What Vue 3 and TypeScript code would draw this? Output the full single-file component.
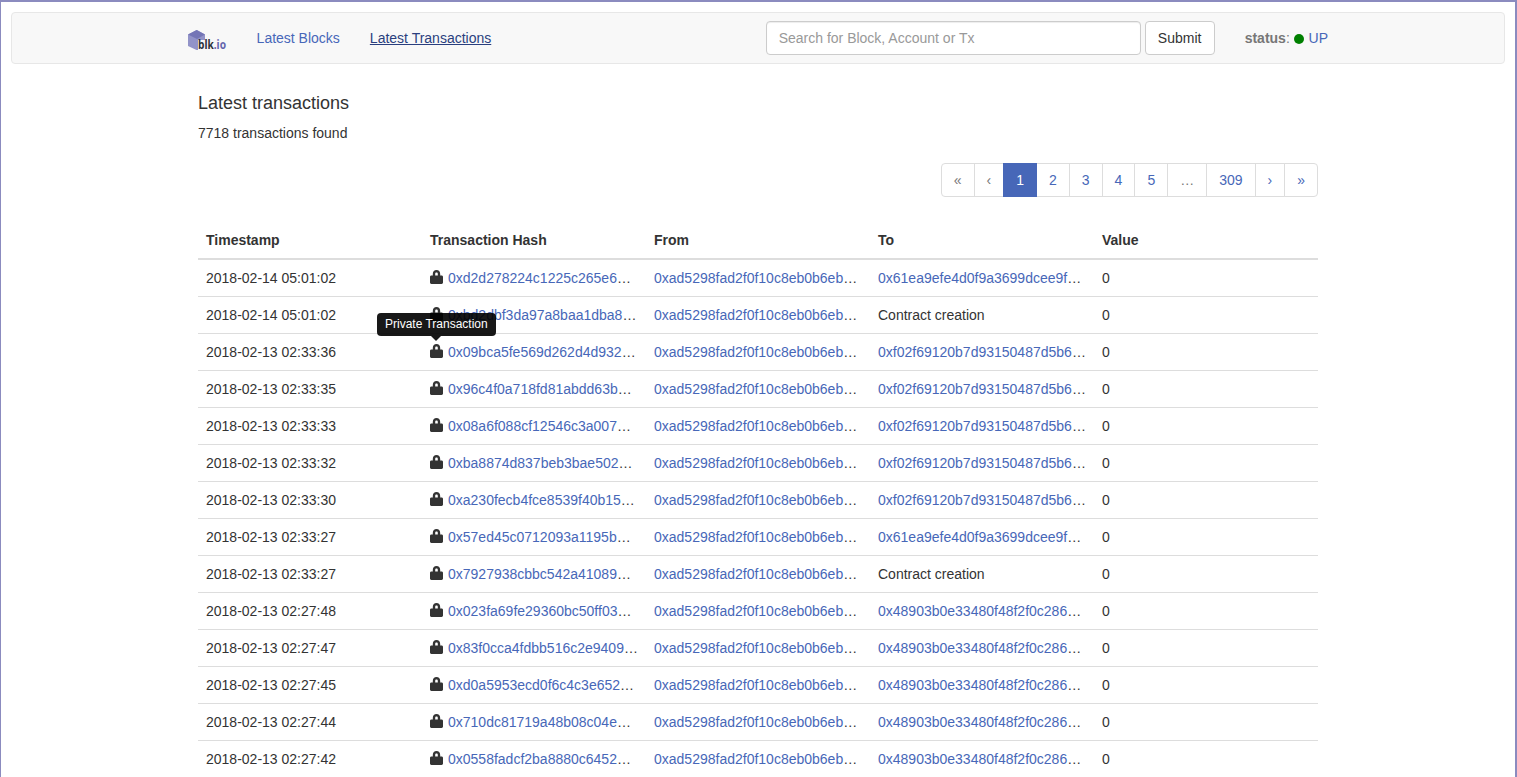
<script setup lang="ts">
interface Tx { time: string; hash: string; to: string | null }
const FROM = '0xad5298fad2f0f10c8eb0b6eb29c1a4b5d3e7f901'
const A = '0x61ea9efe4d0f9a3699dcee9f2b7c1d5e8a3f4c60'
const B = '0xf02f69120b7d93150487d5b6c3e1a9f07d24b8e1'
const C = '0x48903b0e33480f48f2f0c2869ad1e7b3c5a04f92'
const rows: Tx[] = [
  { time: '2018-02-14 05:01:02', hash: '0xd2d278224c1225c265e6a1b3d9f0e47c', to: A },
  { time: '2018-02-14 05:01:02', hash: '0xbd2dbf3da97a8baa1dba8e3c47f1d0a2', to: null },
  { time: '2018-02-13 02:33:36', hash: '0x09bca5fe569d262d4d932f7a1c8e60b4', to: B },
  { time: '2018-02-13 02:33:35', hash: '0x96c4f0a718fd81abdd63b2e9c04d17a5', to: B },
  { time: '2018-02-13 02:33:33', hash: '0x08a6f088cf12546c3a007d4e91b2c6f3', to: B },
  { time: '2018-02-13 02:33:32', hash: '0xba8874d837beb3bae5021fc7d6a90e48', to: B },
  { time: '2018-02-13 02:33:30', hash: '0xa230fecb4fce8539f40b15e72c9d6a01', to: B },
  { time: '2018-02-13 02:33:27', hash: '0x57ed45c0712093a1195b8d4fe6c2703a', to: A },
  { time: '2018-02-13 02:33:27', hash: '0x7927938cbbc542a41089d3e5f7a1c604', to: null },
  { time: '2018-02-13 02:27:48', hash: '0x023fa69fe29360bc50ff03a7d18e4c92', to: C },
  { time: '2018-02-13 02:27:47', hash: '0x83f0cca4fdbb516c2e9409d7a3b1e658', to: C },
  { time: '2018-02-13 02:27:45', hash: '0xd0a5953ecd0f6c4c3e652b18f7a9d04e', to: C },
  { time: '2018-02-13 02:27:44', hash: '0x710dc81719a48b08c04e7f3d92a6b15c', to: C },
  { time: '2018-02-13 02:27:42', hash: '0x0558fadcf2ba8880c6452e1d7b94f3a0', to: C },
]
const pages = ['«', '‹', '1', '2', '3', '4', '5', '…', '309', '›', '»']
</script>

<template>
  <div class="page">
    <nav class="navbar">
      <div class="bar-inner">
        <a class="brand" href="#">
          <svg class="logo" viewBox="0 0 40 22" width="40" height="22">
            <path d="M1 5.5 L10 1 L18 5.5 L18 11 L11 11 L11 21 L9.5 21 L1 17 Z" fill="#9293c8" />
            <path d="M1 5.5 L9.5 1 L18 5.5 L10 10 Z" fill="#7475b6" />
            <text x="11" y="20" class="logo-text" textLength="28" lengthAdjust="spacingAndGlyphs">blk<tspan fill="#6365ad">.io</tspan></text>
          </svg>
        </a>
        <a class="nav-link" href="#">Latest Blocks</a>
        <a class="nav-link active" href="#">Latest Transactions</a>
        <form class="search" @submit.prevent>
          <input class="search-input" type="text" placeholder="Search for Block, Account or Tx" />
          <button class="submit" type="submit">Submit</button>
        </form>
        <div class="status"><b>status</b>: <span class="dot"></span> <a href="#">UP</a></div>
      </div>
    </nav>

    <main class="container">
      <h1 class="title">Latest transactions</h1>
      <p class="found">7718 transactions found</p>
      <div class="pager-row">
        <ul class="pager">
          <li v-for="p in pages" :key="p" :class="{ current: p === '1', muted: p === '«' || p === '‹' || p === '…' }">{{ p }}</li>
        </ul>
      </div>
      <div class="table-wrap">
        <table class="tx">
          <colgroup>
            <col class="c" /><col class="c" /><col class="c" /><col class="c" /><col class="c" />
          </colgroup>
          <thead>
            <tr><th>Timestamp</th><th>Transaction Hash</th><th>From</th><th>To</th><th>Value</th></tr>
          </thead>
          <tbody>
            <tr v-for="r in rows" :key="r.hash">
              <td>{{ r.time }}</td>
              <td>
                <div class="clip">
                  <svg class="lock" viewBox="0 0 13 14" width="13" height="14">
                    <path fill-rule="evenodd" d="M2.8 5.5 V3.9 C2.8 1.5 4.3 0 6.5 0 C8.7 0 10.2 1.5 10.2 3.9 V5.5 H11.6 C12.4 5.5 13 6.1 13 6.9 V12.6 C13 13.4 12.4 14 11.6 14 H1.4 C.6 14 0 13.4 0 12.6 V6.9 C0 6.1 .6 5.5 1.4 5.5 Z M5.2 5.5 H7.8 V3.9 C7.8 3 7.3 2.5 6.5 2.5 C5.7 2.5 5.2 3 5.2 3.9 Z" fill="#333" />
                  </svg>
                  <a href="#">{{ r.hash }}</a>
                </div>
              </td>
              <td><div class="clip"><a href="#">{{ FROM }}</a></div></td>
              <td>
                <div class="clip">
                  <a v-if="r.to" href="#">{{ r.to }}</a>
                  <span v-else>Contract creation</span>
                </div>
              </td>
              <td>0</td>
            </tr>
          </tbody>
        </table>
        <div class="tooltip">Private Transaction</div>
      </div>
    </main>
  </div>
</template>

<style>
html, body { margin: 0; background: #fff; overflow: hidden; height: 100%; }
</style>

<style scoped>
.page {
  box-sizing: border-box;
  height: 777px;
  overflow: hidden;
  border-top: 2px solid #8b8bbf;
  border-left: 1px solid #8b8bbf;
  border-right: 2px solid #8b8bbf;
  padding: 10px 10px 0;
  font-family: "Liberation Sans", Arial, sans-serif;
  font-size: 14px;
  line-height: 20px;
  color: #333;
}
a { color: #4767b8; text-decoration: none; }
.navbar {
  box-sizing: border-box;
  height: 52px;
  background: #f8f8f8;
  border: 1px solid #e7e7e7;
  border-radius: 4px;
}
.bar-inner {
  width: 1152px;
  margin: 0 auto;
  height: 50px;
  display: flex;
  align-items: center;
  white-space: nowrap;
}
.brand { display: flex; width: 74.6px; padding-left: 5px; box-sizing: border-box; flex: none; }
.logo { display: block; margin-top: 3px; overflow: visible; }
.logo-text { font-size: 12px; font-weight: 700; fill: #2c3138; font-family: "Noto Sans", sans-serif; }
.nav-link { margin-right: 30px; flex: none; }
.nav-link.active { color: #2a3f7e; text-decoration: underline; margin-right: 274.4px; }
.search { display: flex; flex: none; }
.search-input {
  box-sizing: border-box;
  width: 375px;
  height: 34px;
  padding: 0 12px;
  border: 1px solid #ccc;
  border-radius: 4px;
  background: #fff;
  box-shadow: inset 0 1px 1px rgba(0, 0, 0, 0.075);
  font: 14px "Liberation Sans", Arial, sans-serif;
  color: #555;
  outline: none;
}
.search-input::placeholder { color: #999; opacity: 1; }
.submit {
  box-sizing: border-box;
  width: 70px;
  height: 34px;
  margin-left: 4px;
  border: 1px solid #ccc;
  border-radius: 4px;
  background: #fff;
  color: #333;
  font: 14px "Liberation Sans", Arial, sans-serif;
  padding: 0;
}
.status { margin-left: 30px; color: #777; white-space: nowrap; }
.dot {
  display: inline-block;
  width: 10px;
  height: 10px;
  margin-right: 1px;
  border-radius: 50%;
  background: #008000;
  vertical-align: -0.5px;
}
.container { width: 1120px; margin: 0 auto; }
.title { margin: 27px 0 0; font-size: 18px; line-height: 24px; font-weight: 400; }
.found { margin: 8px 0 0; line-height: 20px; }
.pager-row { display: flex; justify-content: flex-end; margin-top: 20px; }
.pager {
  display: flex;
  list-style: none;
  margin: 0;
  padding: 0;
  color: #4767b8;
}
.pager li {
  box-sizing: border-box;
  height: 34px;
  line-height: 32px;
  padding: 0 12px;
  border: 1px solid #ddd;
  margin-left: -1px;
  background: #fff;
}
.pager li:first-child { border-radius: 4px 0 0 4px; margin-left: 0; }
.pager li:last-child { border-radius: 0 4px 4px 0; }
.pager li.muted { color: #777; }
.pager li.current { background: #4767b8; border-color: #4767b8; color: #fff; position: relative; }
.table-wrap { position: relative; margin-top: 25px; }
.tx { width: 100%; border-collapse: collapse; table-layout: fixed; }
.c { width: 224px; }
.tx th {
  text-align: left;
  padding: 8px;
  font-weight: 700;
  border-bottom: 2px solid #ddd;
}
.tx td {
  padding: 8px;
  border-bottom: 1px solid #ddd;
  height: 20px;
  white-space: nowrap;
}
.clip { width: 208px; overflow: hidden; text-overflow: ellipsis; white-space: nowrap; }
.lock { vertical-align: -1px; margin-right: 5px; }
.tooltip {
  position: absolute;
  left: 179px;
  top: 91px;
  height: 23px;
  padding: 0 8px;
  line-height: 22px;
  font-size: 12px;
  color: #fff;
  background: #000;
  opacity: 0.9;
  border-radius: 4px;
  white-space: nowrap;
}
.tooltip::after {
  content: "";
  position: absolute;
  left: 50%;
  bottom: -5px;
  margin-left: -5px;
  border-style: solid;
  border-width: 5px 5px 0;
  border-color: #000 transparent transparent;
}
</style>
